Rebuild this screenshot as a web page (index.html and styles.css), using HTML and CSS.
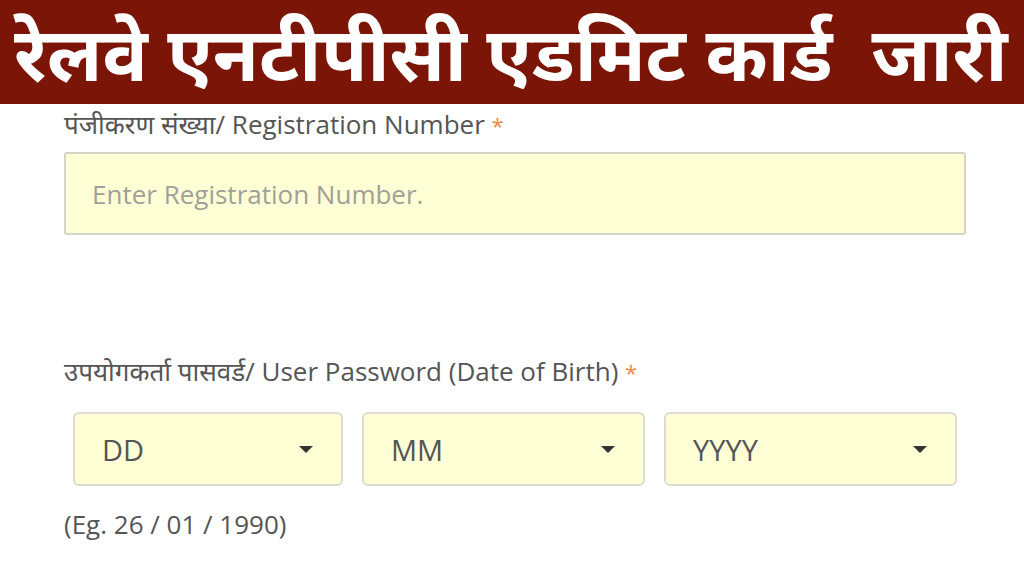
FILE: index.html
```html
<!DOCTYPE html>
<html lang="hi">
<head>
  <meta charset="UTF-8">
  <title>Railway NTPC Admit Card</title>
  <link rel="stylesheet" href="styles.css">
</head>
<body>
  <div class="banner">रेलवे एनटीपीसी एडमिट कार्ड&nbsp; जारी</div>

  <form class="form">
    <label class="label" for="regno">पंजीकरण संख्या/ Registration Number <span class="req">*</span></label>
    <div class="field">
      <input type="text" id="regno" class="text-input" placeholder="Enter Registration Number.">
    </div>

    <label class="label label-pass">उपयोगकर्ता पासवर्ड/ User Password (Date of Birth) <span class="req">*</span></label>
    <div class="dob">
      <div class="select sel-dd"><span>DD</span><i class="caret"></i></div>
      <div class="select sel-mm"><span>MM</span><i class="caret"></i></div>
      <div class="select sel-yy"><span>YYYY</span><i class="caret"></i></div>
    </div>
    <div class="hint">(Eg. 26 / 01 / 1990)</div>
  </form>
</body>
</html>
```

FILE: styles.css
```css
body {
  margin: 0;
  background: #fff;
  font-family: "Open Sans", "Noto Sans", sans-serif;
  color: #555;
}
.banner {
  background: #7b1508;
  color: #fff;
  height: 104px;
  font-family: "Noto Sans", "Noto Sans Devanagari", sans-serif;
  font-weight: bold;
  font-size: 75px;
  line-height: 104px;
  white-space: nowrap;
  padding-left: 14px;
}
.form {
  padding: 6px 0 0 64px;
  width: 902px;
}
.label {
  display: block;
  font-size: 26px;
  line-height: 28px;
  color: #555;
}
.req {
  color: #f0883e;
  font-size: 22px;
}
.field {
  margin-top: 13px;
}
.text-input {
  box-sizing: border-box;
  width: 902px;
  height: 83px;
  border: 2px solid #d4d4c8;
  border-radius: 3px;
  background: #ffffd6;
  padding: 0 26px;
  font-family: "Open Sans", sans-serif;
  font-size: 26px;
  color: #555;
}
.text-input::placeholder {
  color: #a0a098;
}
.label-pass {
  margin-top: 122px;
}
.dob {
  display: flex;
  gap: 19px;
  margin: 26px 0 0 9px;
}
.select {
  box-sizing: border-box;
  height: 74px;
  border: 2px solid #dcdcd0;
  border-radius: 6px;
  background: #ffffd6;
  display: flex;
  align-items: center;
  justify-content: space-between;
  padding: 0 28px 0 27px;
  font-size: 29px;
  color: #555;
}
.sel-dd { width: 270px; }
.sel-mm { width: 283px; }
.sel-yy { width: 293px; }
.caret {
  width: 0;
  height: 0;
  border-left: 7px solid transparent;
  border-right: 7px solid transparent;
  border-top: 7px solid #333;
}
.hint {
  margin-top: 20px;
  font-size: 26px;
  line-height: 36px;
  color: #555;
}
```
